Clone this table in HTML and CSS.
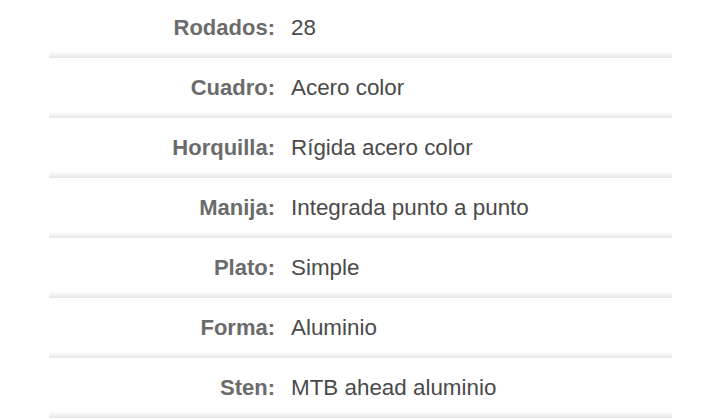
FILE: index.html
```html
<!DOCTYPE html>
<html lang="es">
<head>
<meta charset="utf-8">
<link rel="stylesheet" href="styles.css">
</head>
<body>
<div class="specs">
  <div class="row"><div class="label">Rodados:</div><div class="value">28</div></div>
  <div class="row"><div class="label">Cuadro:</div><div class="value">Acero color</div></div>
  <div class="row"><div class="label">Horquilla:</div><div class="value">Rígida acero color</div></div>
  <div class="row"><div class="label">Manija:</div><div class="value">Integrada punto a punto</div></div>
  <div class="row"><div class="label">Plato:</div><div class="value">Simple</div></div>
  <div class="row"><div class="label">Forma:</div><div class="value">Aluminio</div></div>
  <div class="row"><div class="label">Sten:</div><div class="value">MTB ahead aluminio</div></div>
</div>
</body>
</html>
```
FILE: styles.css
```css
html, body {
  margin: 0;
  padding: 0;
  background: #ffffff;
}
body {
  font-family: "Liberation Sans", Arial, sans-serif;
}
.specs {
  width: 623px;
  margin-left: 49px;
  display: flex;
  flex-direction: column;
}
.row {
  height: 60px;
  display: grid;
  grid-template-columns: 226px 1fr;
  grid-template-rows: 52px 6px 2px;
  column-gap: 16px;
}
.row::after {
  content: "";
  grid-column: 1 / 3;
  grid-row: 2;
  background: linear-gradient(to bottom, #fdfdfd, #e6e6e6);
}
.label, .value {
  grid-row: 1;
  line-height: 52px;
  padding-top: 2px;
  box-sizing: border-box;
}
.label {
  text-align: right;
  font-weight: bold;
  font-size: 22px;
  color: #6b6b6b;
}
.value {
  font-size: 22.4px;
  color: #4a4a4a;
}
```
